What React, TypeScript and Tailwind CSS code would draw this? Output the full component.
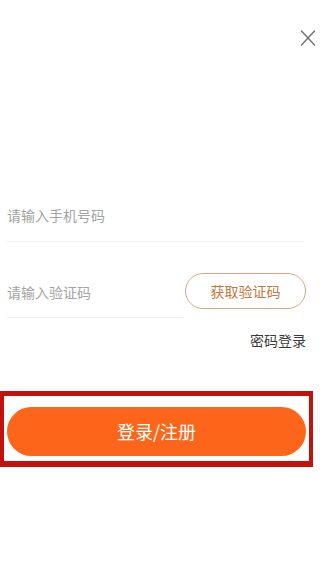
export default function App() {
    return (
        <div className="w-full min-h-[566px] bg-white flex flex-col font-['Noto_Sans_CJK_SC','Noto_Sans',sans-serif]">
            {/* close */}
            <div className="flex justify-end pt-[30px] pr-[4px]">
                <svg width="16" height="16" viewBox="0 0 16 16" fill="none" stroke="#707070" strokeWidth="1.4" strokeLinecap="round">
                    <path d="M1.5 1 L14.5 15" />
                    <path d="M14.5 1 L1.5 15" />
                </svg>
            </div>

            {/* phone */}
            <div className="mt-[159px] mx-[7px] mr-[16px] pb-[16px] border-b border-[#f0f0f0]">
                <span className="block text-[14px] leading-[20px] text-[#a3a3a3]">请输入手机号码</span>
            </div>

            {/* code */}
            <div className="mt-[31px] flex items-start pl-[7px] pr-[14px]">
                <div className="w-[176px] pt-[9px] pb-[15px] border-b border-[#f0f0f0]">
                    <span className="block text-[14px] leading-[20px] text-[#a3a3a3]">请输入验证码</span>
                </div>
                <button className="ml-auto w-[121px] h-[36px] rounded-full border-[1.5px] border-[#dba583] text-[14px] text-[#c4773f] flex items-center justify-center">
                    获取验证码
                </button>
            </div>

            <div className="mt-[12px] flex justify-end pr-[14px]">
                <span className="text-[14px] leading-[20px] text-[#3a3a3a]">密码登录</span>
            </div>

            {/* login */}
            <div className="mt-[41px] w-[313px] border-x-4 border-t-[5px] border-b-[6px] border-[#c3120c] pt-[11px] pb-[5px] pl-[3px] pr-[3px]">
                <button className="w-full h-[49px] rounded-full bg-[#fd661a] text-white text-[18px] flex items-center justify-center">
                    登录/注册
                </button>
            </div>
        </div>
    )
}
